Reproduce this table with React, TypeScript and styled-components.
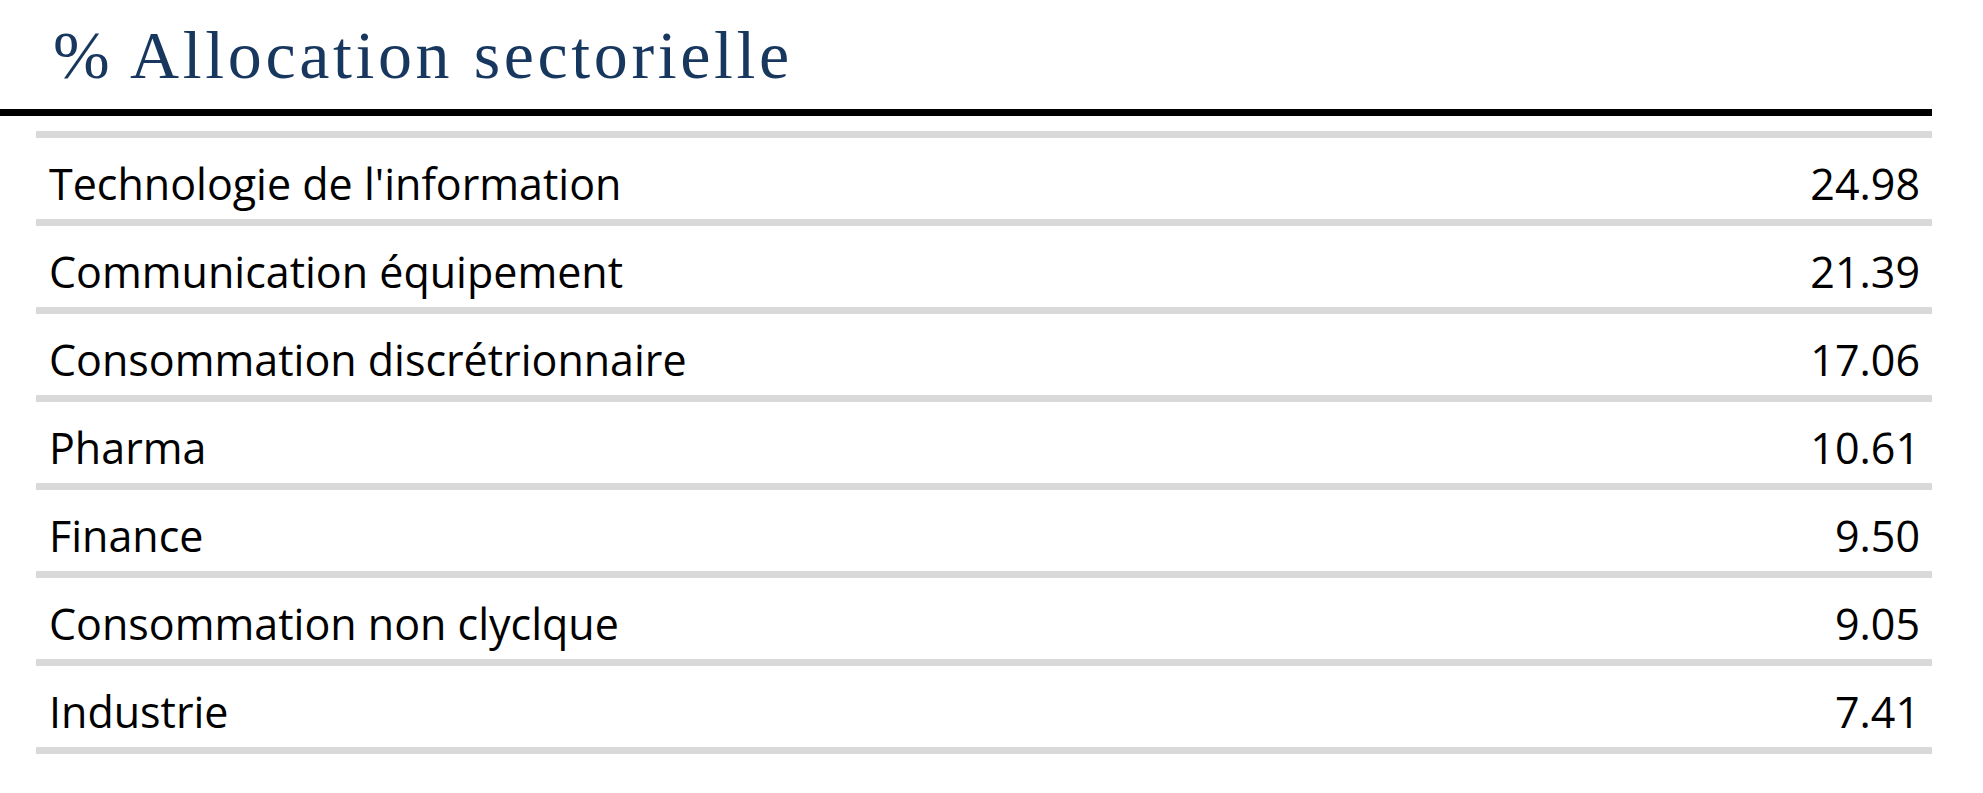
import React from 'react';
import styled, { createGlobalStyle } from 'styled-components';

const GlobalStyle = createGlobalStyle`
  body {
    margin: 0;
    background: #ffffff;
  }
`;

const Page = styled.div`
  width: 1932px;
`;

const Title = styled.h1`
  margin: 0;
  padding: 15px 0 14px 53px;
  font-family: 'Liberation Serif', serif;
  font-weight: 400;
  font-size: 68px;
  line-height: 80px;
  letter-spacing: 3.6px;
  color: #17375e;
  border-bottom: 7px solid #000000;
`;

const Table = styled.div`
  margin: 15px 0 0 36px;
  border-top: 7px solid #d9d9d9;
`;

const Row = styled.div`
  height: 88px;
  padding: 16px 12px 0 13px;
  box-sizing: border-box;
  display: flex;
  justify-content: space-between;
  align-items: flex-start;
  border-bottom: 7px solid #d9d9d9;
  font-family: 'Open Sans', Lato, sans-serif;
  font-size: 43px;
  line-height: normal;
  font-variant-ligatures: none;
  color: #000000;
`;

const Label = styled.span``;

const Value = styled.span`
  text-align: right;
`;

const sectors = [
  { name: "Technologie de l'information", value: '24.98' },
  { name: 'Communication équipement', value: '21.39' },
  { name: 'Consommation discrétrionnaire', value: '17.06' },
  { name: 'Pharma', value: '10.61' },
  { name: 'Finance', value: '9.50' },
  { name: 'Consommation non clyclque', value: '9.05' },
  { name: 'Industrie', value: '7.41' },
];

const App = () => {
  return (
    <Page>
      <GlobalStyle />
      <Title>% Allocation sectorielle</Title>
      <Table>
        {sectors.map((s) => (
          <Row key={s.name}>
            <Label>{s.name}</Label>
            <Value>{s.value}</Value>
          </Row>
        ))}
      </Table>
    </Page>
  );
};

export default App;
